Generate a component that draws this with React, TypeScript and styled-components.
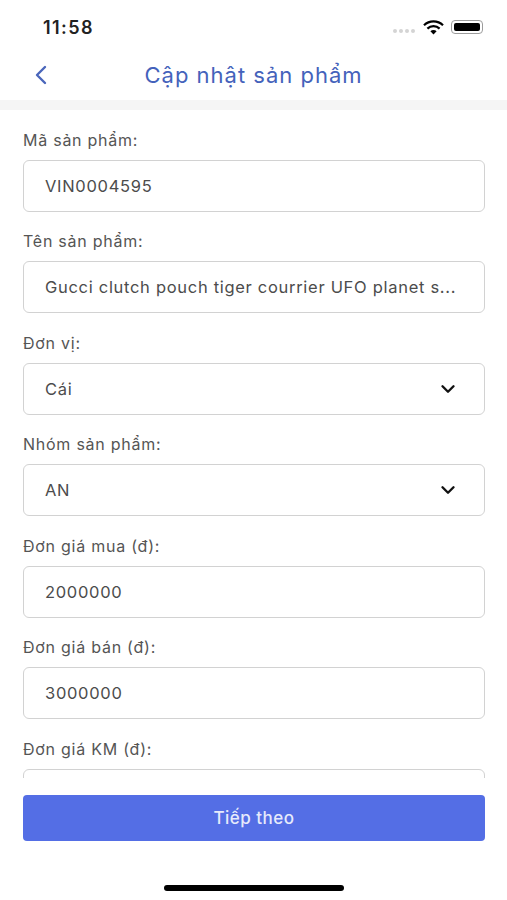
import styled, { createGlobalStyle } from 'styled-components';
import { ChevronDown, ChevronLeft } from 'lucide-react';

type Field = {
  label: string;
  value: string;
  select?: boolean;
};

const fields: Field[] = [
  { label: 'Mã sản phẩm:', value: 'VIN0004595' },
  { label: 'Tên sản phẩm:', value: 'Gucci clutch pouch tiger courrier UFO planet s...' },
  { label: 'Đơn vị:', value: 'Cái', select: true },
  { label: 'Nhóm sản phẩm:', value: 'AN', select: true },
  { label: 'Đơn giá mua (đ):', value: '2000000' },
  { label: 'Đơn giá bán (đ):', value: '3000000' },
  { label: 'Đơn giá KM (đ):', value: '' },
];

export default function App() {
  return (
    <Page>
      <GlobalStyle />
      <StatusBar>
        <Clock>11:58</Clock>
        <StatusIcons>
          <SignalDots>
            <i />
            <i />
            <i />
            <i />
          </SignalDots>
          <svg width="21" height="15" viewBox="0 0 21 15">
            <path d="M1 5.2a13.6 13.6 0 0 1 19 0" fill="none" stroke="#000" strokeWidth="2.2" />
            <path d="M4.4 8.6a8.8 8.8 0 0 1 12.2 0" fill="none" stroke="#000" strokeWidth="2.2" />
            <path d="M10.5 14.4 7.4 11.2a4.4 4.4 0 0 1 6.2 0z" fill="#000" />
          </svg>
          <Battery>
            <BatteryFill />
          </Battery>
        </StatusIcons>
      </StatusBar>
      <Header>
        <BackButton>
          <ChevronLeft size={32} strokeWidth={1.8} />
        </BackButton>
        <Title>Cập nhật sản phẩm</Title>
      </Header>
      <Band />
      <Form>
        {fields.map((f) => (
          <Group key={f.label}>
            <Label>{f.label}</Label>
            <Input>
              <span>{f.value}</span>
              {f.select && <ChevronDown size={22} strokeWidth={2.6} color="#111" />}
            </Input>
          </Group>
        ))}
      </Form>
      <Footer>
        <NextButton>Tiếp theo</NextButton>
      </Footer>
      <HomeBar />
    </Page>
  );
}

const GlobalStyle = createGlobalStyle`
  html, body {
    margin: 0;
    padding: 0;
    background: #fff;
  }
  * {
    box-sizing: border-box;
  }
`;

const Page = styled.div`
  width: 507px;
  height: 900px;
  display: flex;
  flex-direction: column;
  background: #fff;
  font-family: Inter, 'Noto Sans', sans-serif;
  overflow: hidden;
`;

const StatusBar = styled.div`
  height: 50px;
  padding: 4px 24px 0 43px;
  display: flex;
  align-items: center;
  justify-content: space-between;
`;

const Clock = styled.div`
  font-size: 18px;
  font-weight: 600;
  color: #222;
  letter-spacing: 1.4px;
`;

const StatusIcons = styled.div`
  display: flex;
  align-items: center;
  gap: 7px;
`;

const SignalDots = styled.div`
  display: flex;
  gap: 2px;
  padding-top: 7px;
  margin-right: 1px;
  i {
    width: 4px;
    height: 4px;
    border-radius: 50%;
    background: #d4d4d4;
  }
`;

const Battery = styled.div`
  width: 32px;
  height: 14px;
  padding: 2px;
  border: 1px solid #9c9c9c;
  border-radius: 4px;
`;

const BatteryFill = styled.div`
  height: 100%;
  background: #000;
  border-radius: 2px;
`;

const Header = styled.div`
  height: 50px;
  display: flex;
  align-items: center;
  justify-content: center;
  position: relative;
`;

const BackButton = styled.div`
  position: absolute;
  left: 25px;
  top: 9px;
  color: #4a66bb;
  display: flex;
`;

const Title = styled.div`
  font-size: 22px;
  color: #4462bb;
  font-weight: 400;
  letter-spacing: 1px;
`;

const Band = styled.div`
  height: 10px;
  background: #f5f5f5;
`;

const Form = styled.div`
  height: 668px;
  padding: 19.6px 22px 0 23px;
  display: flex;
  flex-direction: column;
  gap: 19.5px;
  overflow: hidden;
`;

const Group = styled.div`
  display: flex;
  flex-direction: column;
  gap: 10px;
  flex-shrink: 0;
`;

const Label = styled.div`
  font-size: 16px;
  line-height: 20px;
  color: #555;
  letter-spacing: 0.75px;
`;

const Input = styled.div`
  height: 52px;
  flex-shrink: 0;
  padding: 0 25px 0 21px;
  display: flex;
  align-items: center;
  justify-content: space-between;
  border: 1.5px solid #d2d2d2;
  border-radius: 6px;
  font-size: 16.5px;
  color: #4c4c4c;
  letter-spacing: 0.7px;
`;

const Footer = styled.div`
  padding: 17px 22px 0 23px;
`;

const NextButton = styled.div`
  height: 46px;
  display: flex;
  align-items: center;
  justify-content: center;
  background: #546ee5;
  border-radius: 4px;
  color: #e6eafb;
  font-size: 17px;
  font-weight: 500;
  letter-spacing: 0.5px;
`;

const HomeBar = styled.div`
  width: 180px;
  height: 6px;
  margin: 44px auto 0;
  background: #000;
  border-radius: 3px;
`;
